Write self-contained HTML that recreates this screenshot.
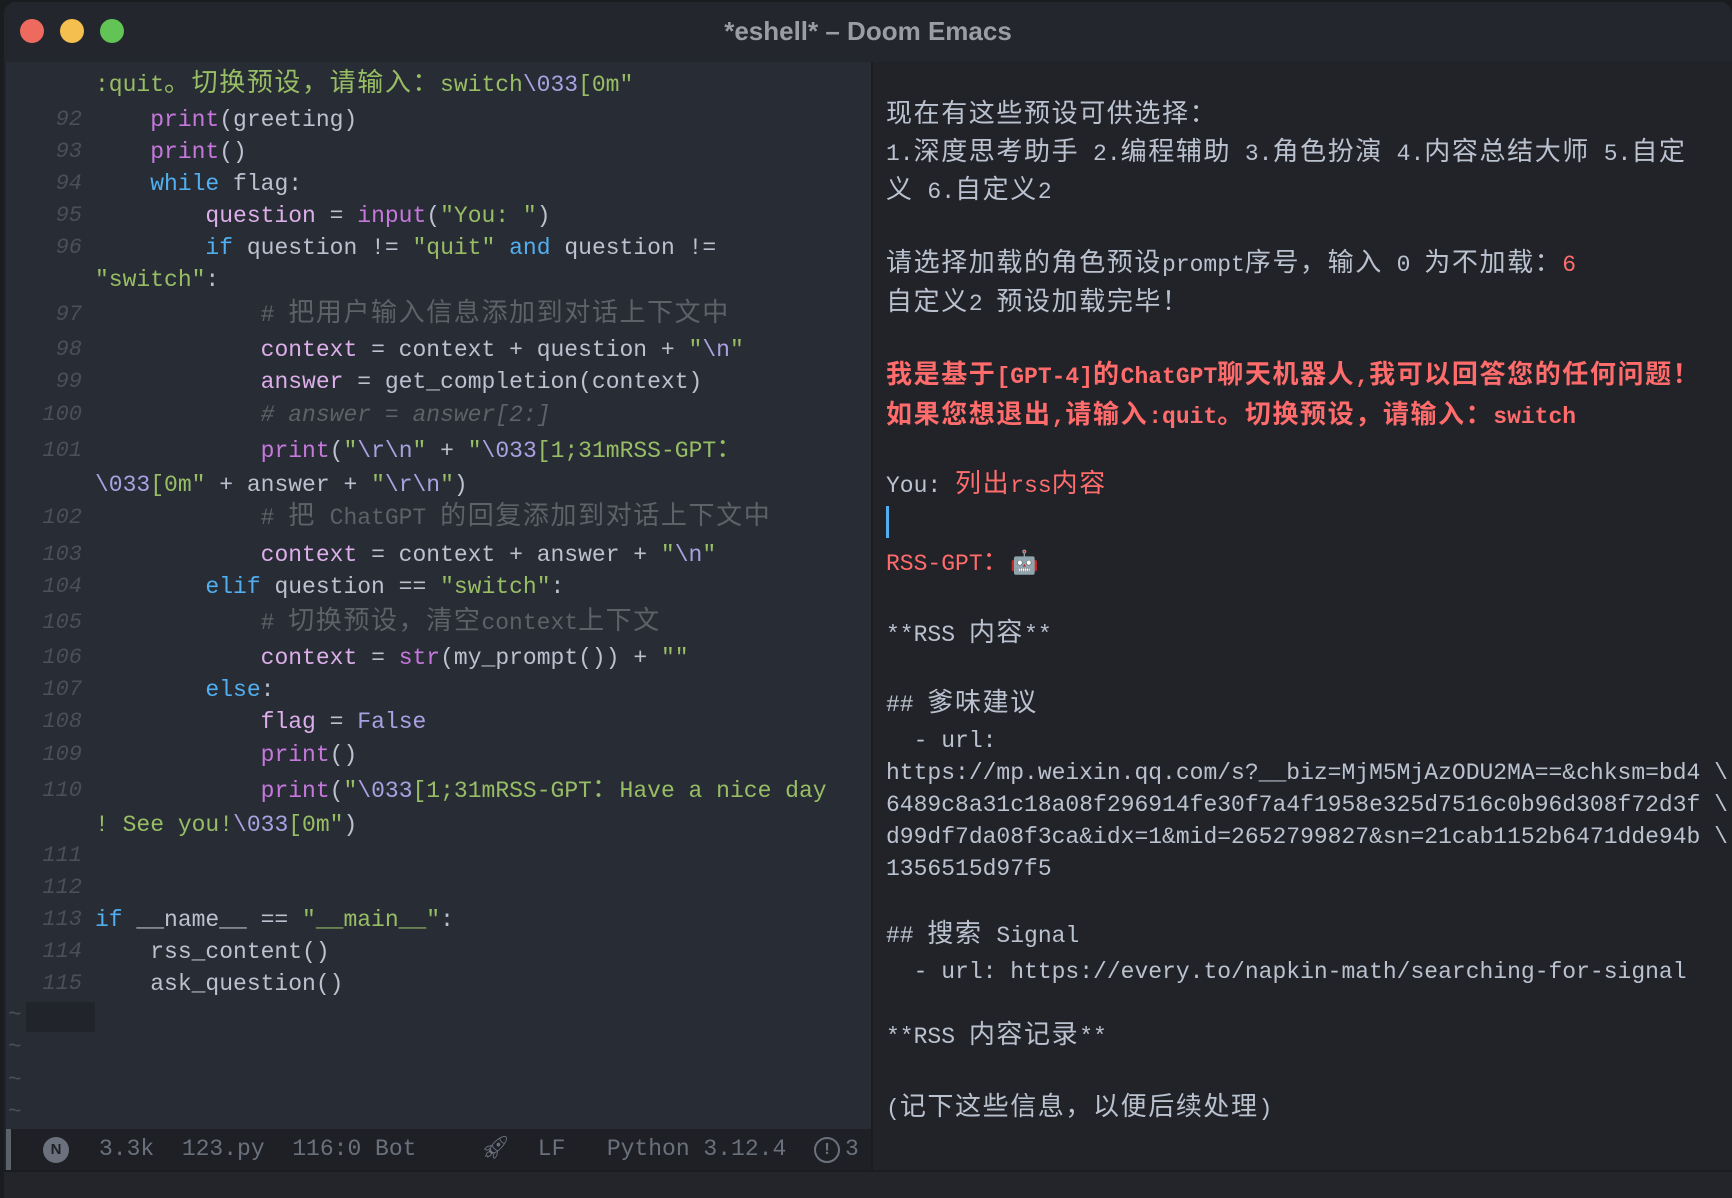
<!DOCTYPE html>
<html><head><meta charset="utf-8"><style>
html,body{margin:0;padding:0;width:1732px;height:1198px;background:#1b1c20;overflow:hidden}
.win{position:absolute;left:4px;top:2px;width:1728px;height:1196px;background:#21242b;border-radius:12px 12px 0 0;overflow:hidden}
.title{position:absolute;left:0;top:0;width:1728px;height:60px;background:#23262d;}
.tt{position:absolute;left:0;width:1728px;top:14px;text-align:center;font:bold 26px "Liberation Sans",sans-serif;color:#9a9da3}
.dot{position:absolute;top:17px;width:24px;height:24px;border-radius:50%}
.left{position:absolute;left:2px;top:60px;width:865px;height:1067px;background:#282c34}
.right{position:absolute;left:867px;top:60px;width:861px;height:1108px;background:#212329;border-left:2px solid #1b1c20}
.l{position:absolute;height:32px;line-height:32px;white-space:pre;font-family:"Liberation Mono","Noto Sans CJK SC",monospace;font-size:23px;color:#bbc2cf}
.z{letter-spacing:1.6px;font-size:26px;line-height:20px}
.n{position:absolute;width:82px;text-align:right;left:-6px;color:#4a4f58;font-style:italic;height:32px;line-height:32px;font-family:"Liberation Mono",monospace;font-size:22px}
.k{color:#51afef}.b{color:#c678dd}.s{color:#98be65}.e{color:#a9a1e1}.v{color:#dcaeea}.c{color:#5B6268}.r{color:#ff6c6b}.R{color:#ff6c6b;font-weight:bold}
.mode{position:absolute;left:2px;top:1127px;width:865px;height:41px;background:#1e2026;border-left:5px solid #5b6268;font-family:"Liberation Mono",monospace;font-size:23px;color:#6b717c}
.bot{position:absolute;left:0;top:1168px;width:1728px;height:30px;background:#23252b;border-top:2px solid #1b1c20}
</style></head><body><div class="win">
<div class="title"><div class="dot" style="left:16px;background:#ee6a5f"></div><div class="dot" style="left:56px;background:#f5bf4f"></div><div class="dot" style="left:96px;background:#61c454"></div><div class="tt">*eshell* – Doom Emacs</div></div>
<div class="left">
<div class="l" style="left:89px;top:7px"><span class="s">:quit<span class="z">。切换预设，请输入：</span>switch</span><span class="e">\033</span><span class="s">[0m"</span></div>
<div class="n" style="top:42px">92</div><div class="l" style="left:89px;top:42px">    <span class="b">print</span>(greeting)</div>
<div class="n" style="top:74px">93</div><div class="l" style="left:89px;top:74px">    <span class="b">print</span>()</div>
<div class="n" style="top:106px">94</div><div class="l" style="left:89px;top:106px">    <span class="k">while</span> flag:</div>
<div class="n" style="top:138px">95</div><div class="l" style="left:89px;top:138px">        <span class="v">question</span> = <span class="b">input</span>(<span class="s">"You: "</span>)</div>
<div class="n" style="top:170px">96</div><div class="l" style="left:89px;top:170px">        <span class="k">if</span> question != <span class="s">"quit"</span> <span class="k">and</span> question !=</div>
<div class="l" style="left:89px;top:202px"><span class="s">"switch"</span>:</div>
<div class="n" style="top:237px">97</div><div class="l" style="left:89px;top:237px">            <span class="c"># <span class="z">把用户输入信息添加到对话上下文中</span></span></div>
<div class="n" style="top:272px">98</div><div class="l" style="left:89px;top:272px">            <span class="v">context</span> = context + question + <span class="s">"</span><span class="e">\n</span><span class="s">"</span></div>
<div class="n" style="top:304px">99</div><div class="l" style="left:89px;top:304px">            <span class="v">answer</span> = get_completion(context)</div>
<div class="n" style="top:337px">100</div><div class="l" style="left:89px;top:337px">            <span class="c" style="font-style:italic"># answer = answer[2:]</span></div>
<div class="n" style="top:373px">101</div><div class="l" style="left:89px;top:373px">            <span class="b">print</span>(<span class="s">"</span><span class="e">\r\n</span><span class="s">"</span> + <span class="s">"</span><span class="e">\033</span><span class="s">[1;31mRSS-GPT<span class="z">：</span></span></div>
<div class="l" style="left:89px;top:407px"><span class="e">\033</span><span class="s">[0m"</span> + answer + <span class="s">"</span><span class="e">\r\n</span><span class="s">"</span>)</div>
<div class="n" style="top:440px">102</div><div class="l" style="left:89px;top:440px">            <span class="c"># <span class="z">把</span> ChatGPT <span class="z">的回复添加到对话上下文中</span></span></div>
<div class="n" style="top:477px">103</div><div class="l" style="left:89px;top:477px">            <span class="v">context</span> = context + answer + <span class="s">"</span><span class="e">\n</span><span class="s">"</span></div>
<div class="n" style="top:509px">104</div><div class="l" style="left:89px;top:509px">        <span class="k">elif</span> question == <span class="s">"switch"</span>:</div>
<div class="n" style="top:545px">105</div><div class="l" style="left:89px;top:545px">            <span class="c"># <span class="z">切换预设，清空</span>context<span class="z">上下文</span></span></div>
<div class="n" style="top:580px">106</div><div class="l" style="left:89px;top:580px">            <span class="v">context</span> = <span class="b">str</span>(my_prompt()) + <span class="s">""</span></div>
<div class="n" style="top:612px">107</div><div class="l" style="left:89px;top:612px">        <span class="k">else</span>:</div>
<div class="n" style="top:644px">108</div><div class="l" style="left:89px;top:644px">            <span class="v">flag</span> = <span class="e">False</span></div>
<div class="n" style="top:677px">109</div><div class="l" style="left:89px;top:677px">            <span class="b">print</span>()</div>
<div class="n" style="top:713px">110</div><div class="l" style="left:89px;top:713px">            <span class="b">print</span>(<span class="s">"</span><span class="e">\033</span><span class="s">[1;31mRSS-GPT<span class="z">：</span>Have a nice day</span></div>
<div class="l" style="left:89px;top:747px"><span class="s">! See you!</span><span class="e">\033</span><span class="s">[0m"</span>)</div>
<div class="n" style="top:778px">111</div>
<div class="n" style="top:810px">112</div>
<div class="n" style="top:842px">113</div><div class="l" style="left:89px;top:842px"><span class="k">if</span> __name__ == <span class="s">"__main__"</span>:</div>
<div class="n" style="top:874px">114</div><div class="l" style="left:89px;top:874px">    rss_content()</div>
<div class="n" style="top:906px">115</div><div class="l" style="left:89px;top:906px">    ask_question()</div>
<div style="position:absolute;left:20px;top:940px;width:69px;height:30px;background:#21242b"></div>
<div class="l" style="left:2px;top:937px;color:#4a4f58">~</div>
<div class="l" style="left:2px;top:969px;color:#4a4f58">~</div>
<div class="l" style="left:2px;top:1002px;color:#4a4f58">~</div>
<div class="l" style="left:2px;top:1034px;color:#4a4f58">~</div>
</div>
<div class="mode">
<div style="position:absolute;left:32px;top:8px;width:26px;height:26px;border-radius:50%;background:#6b717c;color:#1e2026;font:bold 15px 'Liberation Sans',sans-serif;text-align:center;line-height:26px">N</div>
<div class="l" style="left:88px;top:4px;color:#6b717c">3.3k  123.py  116:0 Bot</div>
<div class="l" style="left:470px;top:4px;color:#6b717c">🚀︎  LF   Python 3.12.4</div>
<div style="position:absolute;left:803px;top:8px;width:22px;height:22px;border:2px solid #6b717c;border-radius:50%;color:#6b717c;font:bold 16px 'Liberation Sans';text-align:center;line-height:22px">!</div>
<div class="l" style="left:834px;top:4px;color:#6b717c">3</div>
</div>
<div class="right">
<div class="l" style="left:13px;top:38px"><span class="z">现在有这些预设可供选择：</span></div>
<div class="l" style="left:13px;top:76px">1.<span class="z">深度思考助手</span> 2.<span class="z">编程辅助</span> 3.<span class="z">角色扮演</span> 4.<span class="z">内容总结大师</span> 5.<span class="z">自定</span></div>
<div class="l" style="left:13px;top:114px"><span class="z">义</span> 6.<span class="z">自定义</span>2</div>
<div class="l" style="left:13px;top:187px"><span class="z">请选择加载的角色预设</span>prompt<span class="z">序号，输入</span> 0 <span class="z">为不加载：</span><span class="r">6</span></div>
<div class="l" style="left:13px;top:226px"><span class="z">自定义</span>2 <span class="z">预设加载完毕！</span></div>
<div class="l R" style="left:13px;top:299px"><span class="z">我是基于</span>[GPT-4]<span class="z">的</span>ChatGPT<span class="z">聊天机器人</span>,<span class="z">我可以回答您的任何问题！</span></div>
<div class="l R" style="left:13px;top:339px"><span class="z">如果您想退出</span>,<span class="z">请输入</span>:quit<span class="z">。切换预设，请输入：</span>switch</div>
<div class="l" style="left:13px;top:408px">You: <span class="r"><span class="z">列出</span>rss<span class="z">内容</span></span></div>
<div style="position:absolute;left:13px;top:444px;width:3px;height:32px;background:#51afef"></div>
<div class="l r" style="left:13px;top:486px">RSS-GPT<span class="z">：</span>🤖</div>
<div class="l" style="left:13px;top:557px">**RSS <span class="z">内容</span>**</div>
<div class="l" style="left:13px;top:627px">## <span class="z">爹味建议</span></div>
<div class="l" style="left:13px;top:663px">  - url:</div>
<div class="l" style="left:13px;top:695px">https://mp.weixin.qq.com/s?__biz=MjM5MjAzODU2MA==&amp;chksm=bd4 \</div>
<div class="l" style="left:13px;top:727px">6489c8a31c18a08f296914fe30f7a4f1958e325d7516c0b96d308f72d3f \</div>
<div class="l" style="left:13px;top:759px">d99df7da08f3ca&amp;idx=1&amp;mid=2652799827&amp;sn=21cab1152b6471dde94b \</div>
<div class="l" style="left:13px;top:791px">1356515d97f5</div>
<div class="l" style="left:13px;top:858px">## <span class="z">搜索</span> Signal</div>
<div class="l" style="left:13px;top:894px">  - url: https://every.to/napkin-math/searching-for-signal</div>
<div class="l" style="left:13px;top:959px">**RSS <span class="z">内容记录</span>**</div>
<div class="l" style="left:13px;top:1031px">(<span class="z">记下这些信息，以便后续处理</span>)</div>
</div>
<div class="bot"></div>
</div></body></html>
